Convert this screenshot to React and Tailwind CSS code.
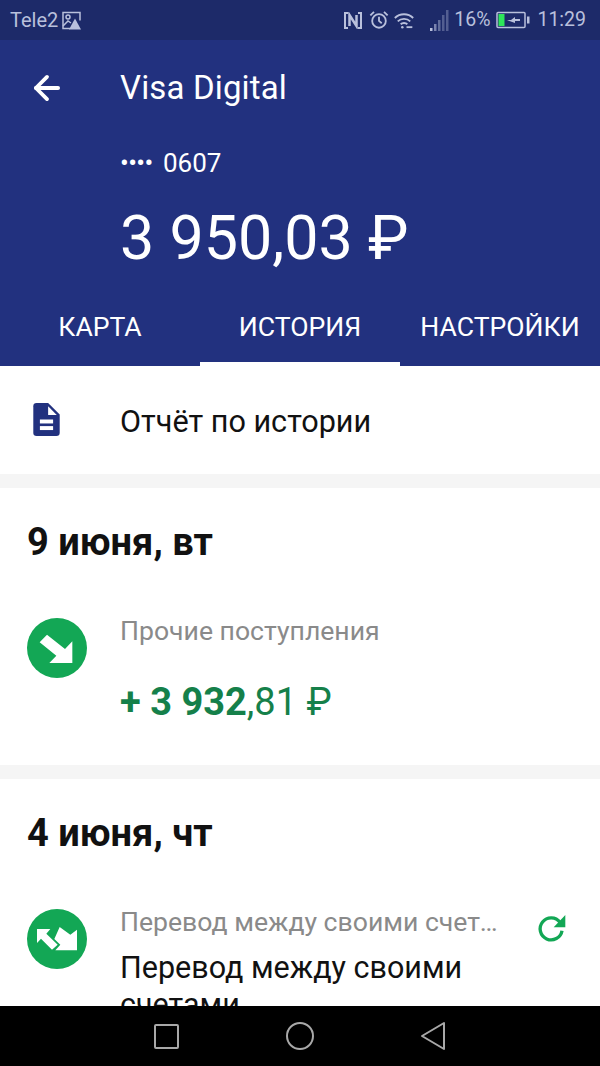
import { ArrowLeft } from 'lucide-react';

function StatusBar() {
  return (
    <div className="flex h-10 items-center justify-between bg-[#1d2a69] pl-2.5 pr-3.5 text-[20px] text-[#b9c0dc]">
      <div className="flex items-center gap-1">
        <span>Tele2</span>
        <svg width="19" height="19" viewBox="0 0 19 19" fill="none" stroke="currentColor" strokeWidth="1.5">
          <path d="M8 17.5H1V1.5h17v8" />
          <circle cx="6" cy="6" r="2" />
          <path d="M1 15l5-5 3 2" />
          <path d="M13 7.5l6 11H7z" fill="currentColor" stroke="none" />
        </svg>
      </div>
      <div className="flex items-center text-[19.5px]">
        <svg width="18" height="17" viewBox="0 0 18 17" className="mr-[7px]" fill="none" stroke="currentColor" strokeWidth="2">
          <path d="M4 1H1v15h3M14 1h3v15h-3" />
          <path d="M5.500 14V3l7 11V3" strokeWidth="2.500" />
        </svg>
        <svg width="20" height="20" viewBox="0 0 22 22" fill="none" stroke="currentColor" strokeWidth="2" className="mr-[5px]">
          <circle cx="11" cy="12" r="7.500" />
          <path d="M11 7.500V12l3 2.500M1.500 6l4-4M20.500 6l-4-4" />
        </svg>
        <svg width="20" height="17" viewBox="0 0 24 20" fill="none" stroke="currentColor" strokeWidth="2.200" className="mr-[16px]">
          <path d="M1 7c6-6 16-6 22 0M4.500 11c4-4 11-4 15 0M8 14.500c2-2 6-2 8 0" />
          <circle cx="10" cy="18" r="1.500" fill="currentColor" stroke="none" />
          <path d="M15 18h7" />
        </svg>
        <svg width="20" height="24" viewBox="0 0 20 24" fill="currentColor" className="mr-[4px]">
          <rect x="0" y="20" width="2.500" height="3" />
          <rect x="4" y="16" width="2.500" height="7" opacity="0.6" />
          <rect x="8" y="12" width="2.500" height="11" opacity="0.45" />
          <rect x="12" y="7" width="2.500" height="16" opacity="0.35" />
          <rect x="16" y="2" width="2.500" height="21" opacity="0.35" />
        </svg>
        <span className="mr-[6px]">16%</span>
        <svg width="34" height="18" viewBox="0 0 34 18" className="mr-[7px]">
          <rect x="1" y="1.500" width="28" height="15" rx="1" fill="none" stroke="currentColor" strokeWidth="1.500" />
          <rect x="2.500" y="3" width="6" height="12" fill="#2ee65a" />
          <rect x="31" y="5.500" width="2.500" height="7" fill="currentColor" />
          <path d="M11 9h4l4-3v2h5v2h-5v2z" fill="currentColor" />
        </svg>
        <span>11:29</span>
      </div>
    </div>
  );
}

function Header() {
  return (
    <div className="bg-[#22317f] text-white">
      <div className="flex h-[95px] items-center pl-[28px]">
        <ArrowLeft size={38} strokeWidth={2.4} />
        <span className="ml-[54px] text-[33px] tracking-[0.15px]">Visa Digital</span>
      </div>
      <div className="pl-[120px]">
        <div className="mt-[14px] flex h-[29px] items-center text-[26px]">
          <span className="mr-[8px] w-[35px] whitespace-nowrap text-[26px] tracking-[-0.6px]">••••</span>
          <span>0607</span>
        </div>
        <div className="mt-[27px] h-[67px] text-[61px] leading-[67px]">3 950,03 ₽</div>
      </div>
      <div className="mt-[34px] flex h-[60px]">
        {['КАРТА', 'ИСТОРИЯ', 'НАСТРОЙКИ'].map((tab, i) => (
          <div
            key={tab}
            className={`flex w-[200px] items-center justify-center pb-[14px] text-[26.6px] ${i === 1 ? 'border-b-4 border-white' : 'border-b-4 border-transparent'}`}
          >
            {tab}
          </div>
        ))}
      </div>
    </div>
  );
}

function Report() {
  return (
    <div className="flex h-[108px] items-center bg-white pl-[33px]">
      <svg width="27" height="33" viewBox="100 70 80 100" className="mt-[-2px]">
        <path d="M110 70H145L180 105V160a10 10 0 0 1-10 10H110a10 10 0 0 1-10-10V80a10 10 0 0 1 10-10z" fill="#22317f" />
        <path d="M145 80V106H171z" fill="#fff" />
        <rect x="120" y="120" width="40" height="12" fill="#fff" />
        <rect x="120" y="140" width="40" height="12" fill="#fff" />
      </svg>
      <span className="ml-[60px] mt-[4px] text-[30.6px] text-[#111]">Отчёт по истории</span>
    </div>
  );
}

function Incoming() {
  return (
    <svg width="60" height="60" viewBox="80 55 180 180" className="shrink-0">
      <circle cx="170" cy="145" r="90" fill="#13a755" />
      <path d="M140 105L194 148 216 125V190H147L168 168 118 128z" fill="#fff" />
    </svg>
  );
}

function Transfer() {
  return (
    <svg width="60" height="60" viewBox="80 58 180 180" className="shrink-0">
      <circle cx="170" cy="148" r="90" fill="#13a755" />
      <path d="M110 118H150L138 132 172 165 155 180 122 147 110 160z" fill="#fff" />
      <path d="M178 112L210 135 230 120V182H165L180 165 162 148z" fill="#fff" />
    </svg>
  );
}

export default function App() {
  return (
    <div className="flex h-[1066px] w-[600px] flex-col overflow-hidden bg-[#f5f5f5] font-['Roboto',sans-serif]">
      <StatusBar />
      <Header />
      <div className="min-h-0 flex-1 overflow-hidden">
        <Report />
        <div className="mt-[14px] h-[277px] bg-white pl-[27px]">
          <div className="flex h-[108px] items-center text-[38px] font-bold text-[#111]">9 июня, вт</div>
          <div className="flex">
            <div className="mt-[22px]"><Incoming /></div>
            <div className="ml-[33px]">
              <div className="mt-[18px] text-[26.6px] leading-[34px] text-[#8a8a8a]">Прочие поступления</div>
              <div className="mt-[29px] text-[38px] leading-[50px] text-[#15804a]">
                <span className="font-bold">+ 3 932</span>,81 ₽
              </div>
            </div>
          </div>
        </div>
        <div className="mt-[14px] bg-white pl-[27px] pb-8">
          <div className="flex h-[108px] items-center text-[38px] font-bold text-[#111]">4 июня, чт</div>
          <div className="flex">
            <div className="mt-[22px]"><Transfer /></div>
            <div className="ml-[33px] w-[380px]">
              <div className="mt-[18px] truncate text-[26.6px] leading-[34px] text-[#8a8a8a]">Перевод между своими счетами</div>
              <div className="mt-[10px] text-[30.5px] leading-[37px] text-[#111]">Перевод между своими счетами</div>
            </div>
            <svg width="30" height="30" viewBox="175 75 90 90" className="ml-[37px] mt-[27px]">
              <path d="M250 125A33 33 0 1 1 244 100" fill="none" stroke="#13a755" strokeWidth="10" />
              <path d="M260 78V115H225z" fill="#13a755" />
            </svg>
          </div>
        </div>
      </div>
      <div className="flex h-[60px] shrink-0 items-center justify-between bg-black pl-[154px] pr-[155px]">
        <div className="h-[25px] w-[25px] rounded-[2px] border-2 border-[#a8a8a8]" />
        <div className="h-[28px] w-[28px] rounded-full border-2 border-[#a8a8a8]" />
        <svg width="25" height="30" viewBox="0 0 25 30" fill="none" stroke="#a8a8a8" strokeWidth="2" strokeLinejoin="round">
          <path d="M24 2v26L2 15z" />
        </svg>
      </div>
    </div>
  );
}
